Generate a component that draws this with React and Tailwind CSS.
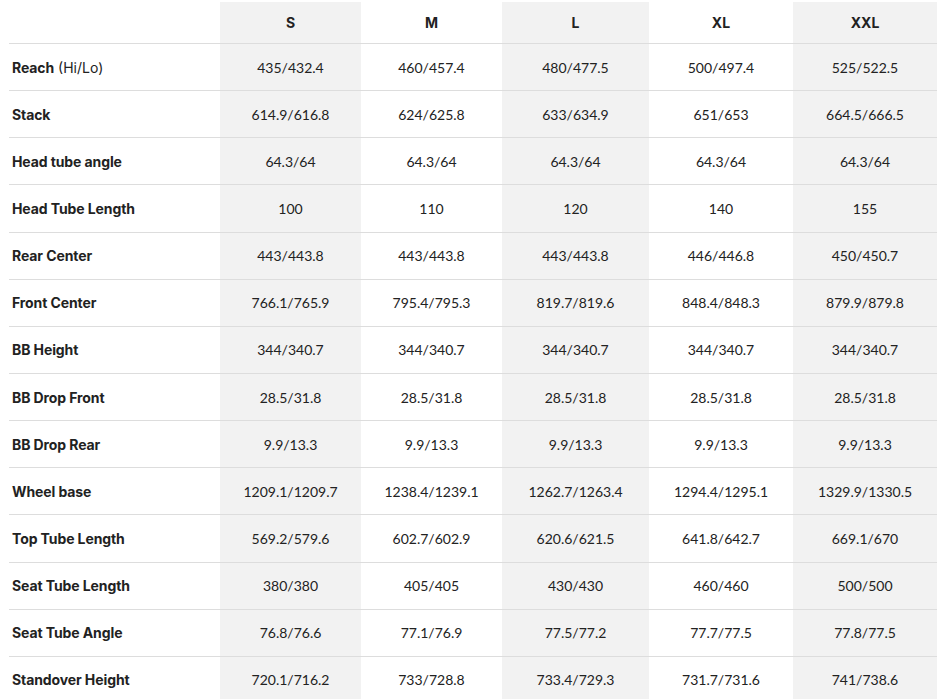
import React from "react";

const sizes = ["S", "M", "L", "XL", "XXL"];
const rows = [
  ["Reach", ["435/432.4", "460/457.4", "480/477.5", "500/497.4", "525/522.5"], "(Hi/Lo)"],
  ["Stack", ["614.9/616.8", "624/625.8", "633/634.9", "651/653", "664.5/666.5"]],
  ["Head tube angle", ["64.3/64", "64.3/64", "64.3/64", "64.3/64", "64.3/64"]],
  ["Head Tube Length", ["100", "110", "120", "140", "155"]],
  ["Rear Center", ["443/443.8", "443/443.8", "443/443.8", "446/446.8", "450/450.7"]],
  ["Front Center", ["766.1/765.9", "795.4/795.3", "819.7/819.6", "848.4/848.3", "879.9/879.8"]],
  ["BB Height", ["344/340.7", "344/340.7", "344/340.7", "344/340.7", "344/340.7"]],
  ["BB Drop Front", ["28.5/31.8", "28.5/31.8", "28.5/31.8", "28.5/31.8", "28.5/31.8"]],
  ["BB Drop Rear", ["9.9/13.3", "9.9/13.3", "9.9/13.3", "9.9/13.3", "9.9/13.3"]],
  ["Wheel base", ["1209.1/1209.7", "1238.4/1239.1", "1262.7/1263.4", "1294.4/1295.1", "1329.9/1330.5"]],
  ["Top Tube Length", ["569.2/579.6", "602.7/602.9", "620.6/621.5", "641.8/642.7", "669.1/670"]],
  ["Seat Tube Length", ["380/380", "405/405", "430/430", "460/460", "500/500"]],
  ["Seat Tube Angle", ["76.8/76.6", "77.1/76.9", "77.5/77.2", "77.7/77.5", "77.8/77.5"]],
  ["Standover Height", ["720.1/716.2", "733/728.8", "733.4/729.3", "731.7/731.6", "741/738.6"]],
];

const colBg = ["bg-[#f2f2f2]", "bg-white", "bg-[#f2f2f2]", "bg-white", "bg-[#f2f2f2]"];

export default function App() {
  return (
    <div
      className="w-[937px] h-[699px] overflow-hidden bg-white text-[#222] pl-[9px] pt-[2px]"
      style={{ fontFamily: "Lato, 'Open Sans', sans-serif" }}
    >
      <div className="grid grid-cols-[211px_141px_141px_147px_144px_144px]">
        <div className="h-[42px] border-b border-[#dddddd]" />
        {sizes.map((s, i) => (
          <div
            key={s}
            className={`h-[42px] border-b border-[#dddddd] flex items-center justify-center text-[14px] font-bold font-['Inter',sans-serif] ${colBg[i]}`}
          >
            {s}
          </div>
        ))}
        {rows.map(([label, vals, extra]) => (
          <React.Fragment key={label}>
            <div className="h-[47.15px] border-b border-[#dddddd] flex items-center pl-[3px] text-[14px] font-['Inter',sans-serif]">
              <span className="font-bold tracking-[-0.1px]">{label}</span>
              {extra && <span className="ml-[4px] font-normal">{extra}</span>}
            </div>
            {vals.map((v, i) => (
              <div
                key={i}
                className={`h-[47.15px] border-b border-[#dddddd] flex items-center justify-center text-[14px] ${colBg[i]}`}
              >
                {v}
              </div>
            ))}
          </React.Fragment>
        ))}
      </div>
    </div>
  );
}
